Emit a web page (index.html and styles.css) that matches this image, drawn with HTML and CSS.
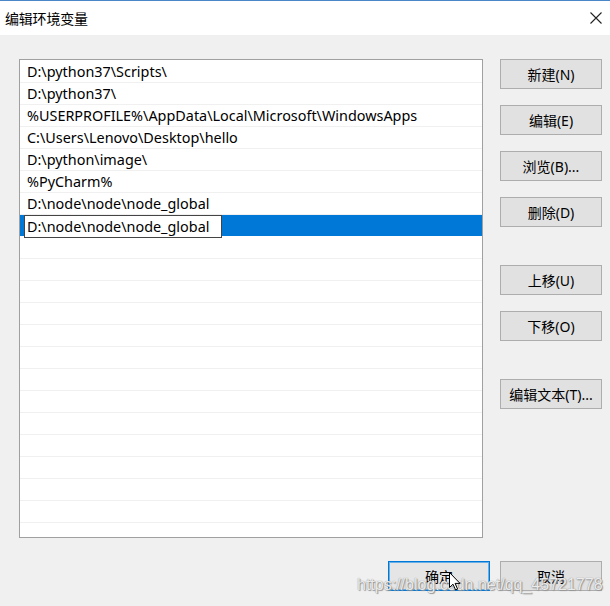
FILE: index.html
```html
<!DOCTYPE html>
<html lang="zh-CN">
<head>
<meta charset="utf-8">
<title>编辑环境变量</title>
<link rel="stylesheet" href="styles.css">
</head>
<body>
<div class="window">
  <div class="titlebar">
    <span class="title">编辑环境变量</span>
    <svg class="close" width="12" height="12" viewBox="0 0 12 12"><path d="M0.5 0.5 L11.5 11.5 M11.5 0.5 L0.5 11.5" stroke="#222" stroke-width="1.1" fill="none"/></svg>
  </div>
  <div class="content">
    <div class="main">
      <div class="list">
        <div class="row">D:\python37\Scripts\</div>
        <div class="row">D:\python37\</div>
        <div class="row">%USERPROFILE%\AppData\Local\Microsoft\WindowsApps</div>
        <div class="row">C:\Users\Lenovo\Desktop\hello</div>
        <div class="row">D:\python\image\</div>
        <div class="row">%PyCharm%</div>
        <div class="row">D:\node\node\node_global</div>
        <div class="row selected"><span class="edit">D:\node\node\node_global</span></div>
        <div class="row"></div><div class="row"></div><div class="row"></div>
        <div class="row"></div><div class="row"></div><div class="row"></div>
        <div class="row"></div><div class="row"></div><div class="row"></div>
        <div class="row"></div><div class="row"></div><div class="row"></div>
        <div class="row"></div><div class="row"></div>
      </div>
      <div class="side">
        <button class="btn">新建(N)</button>
        <button class="btn">编辑(E)</button>
        <button class="btn">浏览(B)...</button>
        <button class="btn">删除(D)</button>
        <button class="btn gap-big">上移(U)</button>
        <button class="btn">下移(O)</button>
        <button class="btn gap-big">编辑文本(T)...</button>
      </div>
    </div>
    <div class="footer">
      <button class="btn default">确定</button>
      <button class="btn">取消</button>
    </div>
  </div>
  <div class="watermark">https://blog.csdn.net/qq_45721778</div>
  <svg class="cursor" width="12" height="19" viewBox="0 0 12 19"><path d="M0.5 0.5 L0.5 15.5 L4 12.2 L6.6 18 L8.6 17.1 L6.1 11.4 L11 11.4 Z" fill="#fff" stroke="#000" stroke-width="1" stroke-linejoin="round"/></svg>
</div>
</body>
</html>
```
FILE: styles.css
```css
html, body {
  margin: 0;
  padding: 0;
}
body {
  width: 610px;
  height: 606px;
  overflow: hidden;
  background: #f0f0f0;
  font-family: "Noto Sans", "Noto Sans CJK SC", sans-serif;
}
.window {
  position: relative;
  width: 610px;
  height: 606px;
  background: #f0f0f0;
}
.titlebar {
  height: 34px;
  background: #fff;
  border-top: 1px solid #4a86c8;
  display: flex;
  align-items: center;
  justify-content: space-between;
  padding: 0 8px 0 5px;
}
.title {
  font-family: "Noto Sans CJK SC", sans-serif;
  font-size: 14px;
  color: #000;
  letter-spacing: -0.2px;
}
.close {
  display: block;
}
.content {
  padding: 24px 8px 0 19px;
}
.main {
  display: flex;
  align-items: flex-start;
}
.list {
  box-sizing: border-box;
  width: 464px;
  height: 479px;
  padding-top: 1px;
  background: #fff;
  border: 1px solid #a0a0a0;
  overflow: hidden;
}
.row {
  height: 21px;
  border-bottom: 1px solid #f0f0f0;
  padding-left: 7px;
  font-size: 14.4px;
  line-height: 21px;
  color: #000;
  white-space: nowrap;
}
.row.selected {
  background: #0078d7;
  border-bottom-color: #fff;
  padding-left: 4px;
}
.edit {
  display: inline-block;
  box-sizing: border-box;
  width: 198px;
  height: 23px;
  background: #fff;
  border: 1px solid #444;
  padding-left: 2px;
  line-height: 21px;
  vertical-align: top;
}
.side {
  margin-left: 17px;
  display: flex;
  flex-direction: column;
  gap: 16px;
}
.btn {
  box-sizing: border-box;
  width: 102px;
  height: 30px;
  background: #e1e1e1;
  border: 1px solid #adadad;
  font-family: "Noto Sans", "Noto Sans CJK SC", sans-serif;
  font-size: 14px;
  color: #000;
  padding: 0;
  margin: 0;
}
.side .gap-big {
  margin-top: 22px;
}
.footer {
  display: flex;
  justify-content: flex-end;
  gap: 10px;
  margin-top: 23px;
}
.btn.default {
  border: 1px solid #0078d7;
  box-shadow: inset 0 0 0 1px #6aaee6;
  background: #e5e5e5;
}
.watermark {
  position: absolute;
  left: 357px;
  top: 576px;
  font-family: "Liberation Sans", Arial, sans-serif;
  font-size: 16px;
  color: rgba(255, 255, 255, 0.85);
  text-shadow: 0 0 1px #777, 1px 1px 1px #999;
  white-space: nowrap;
}
.cursor {
  position: absolute;
  left: 449px;
  top: 572px;
}
```
